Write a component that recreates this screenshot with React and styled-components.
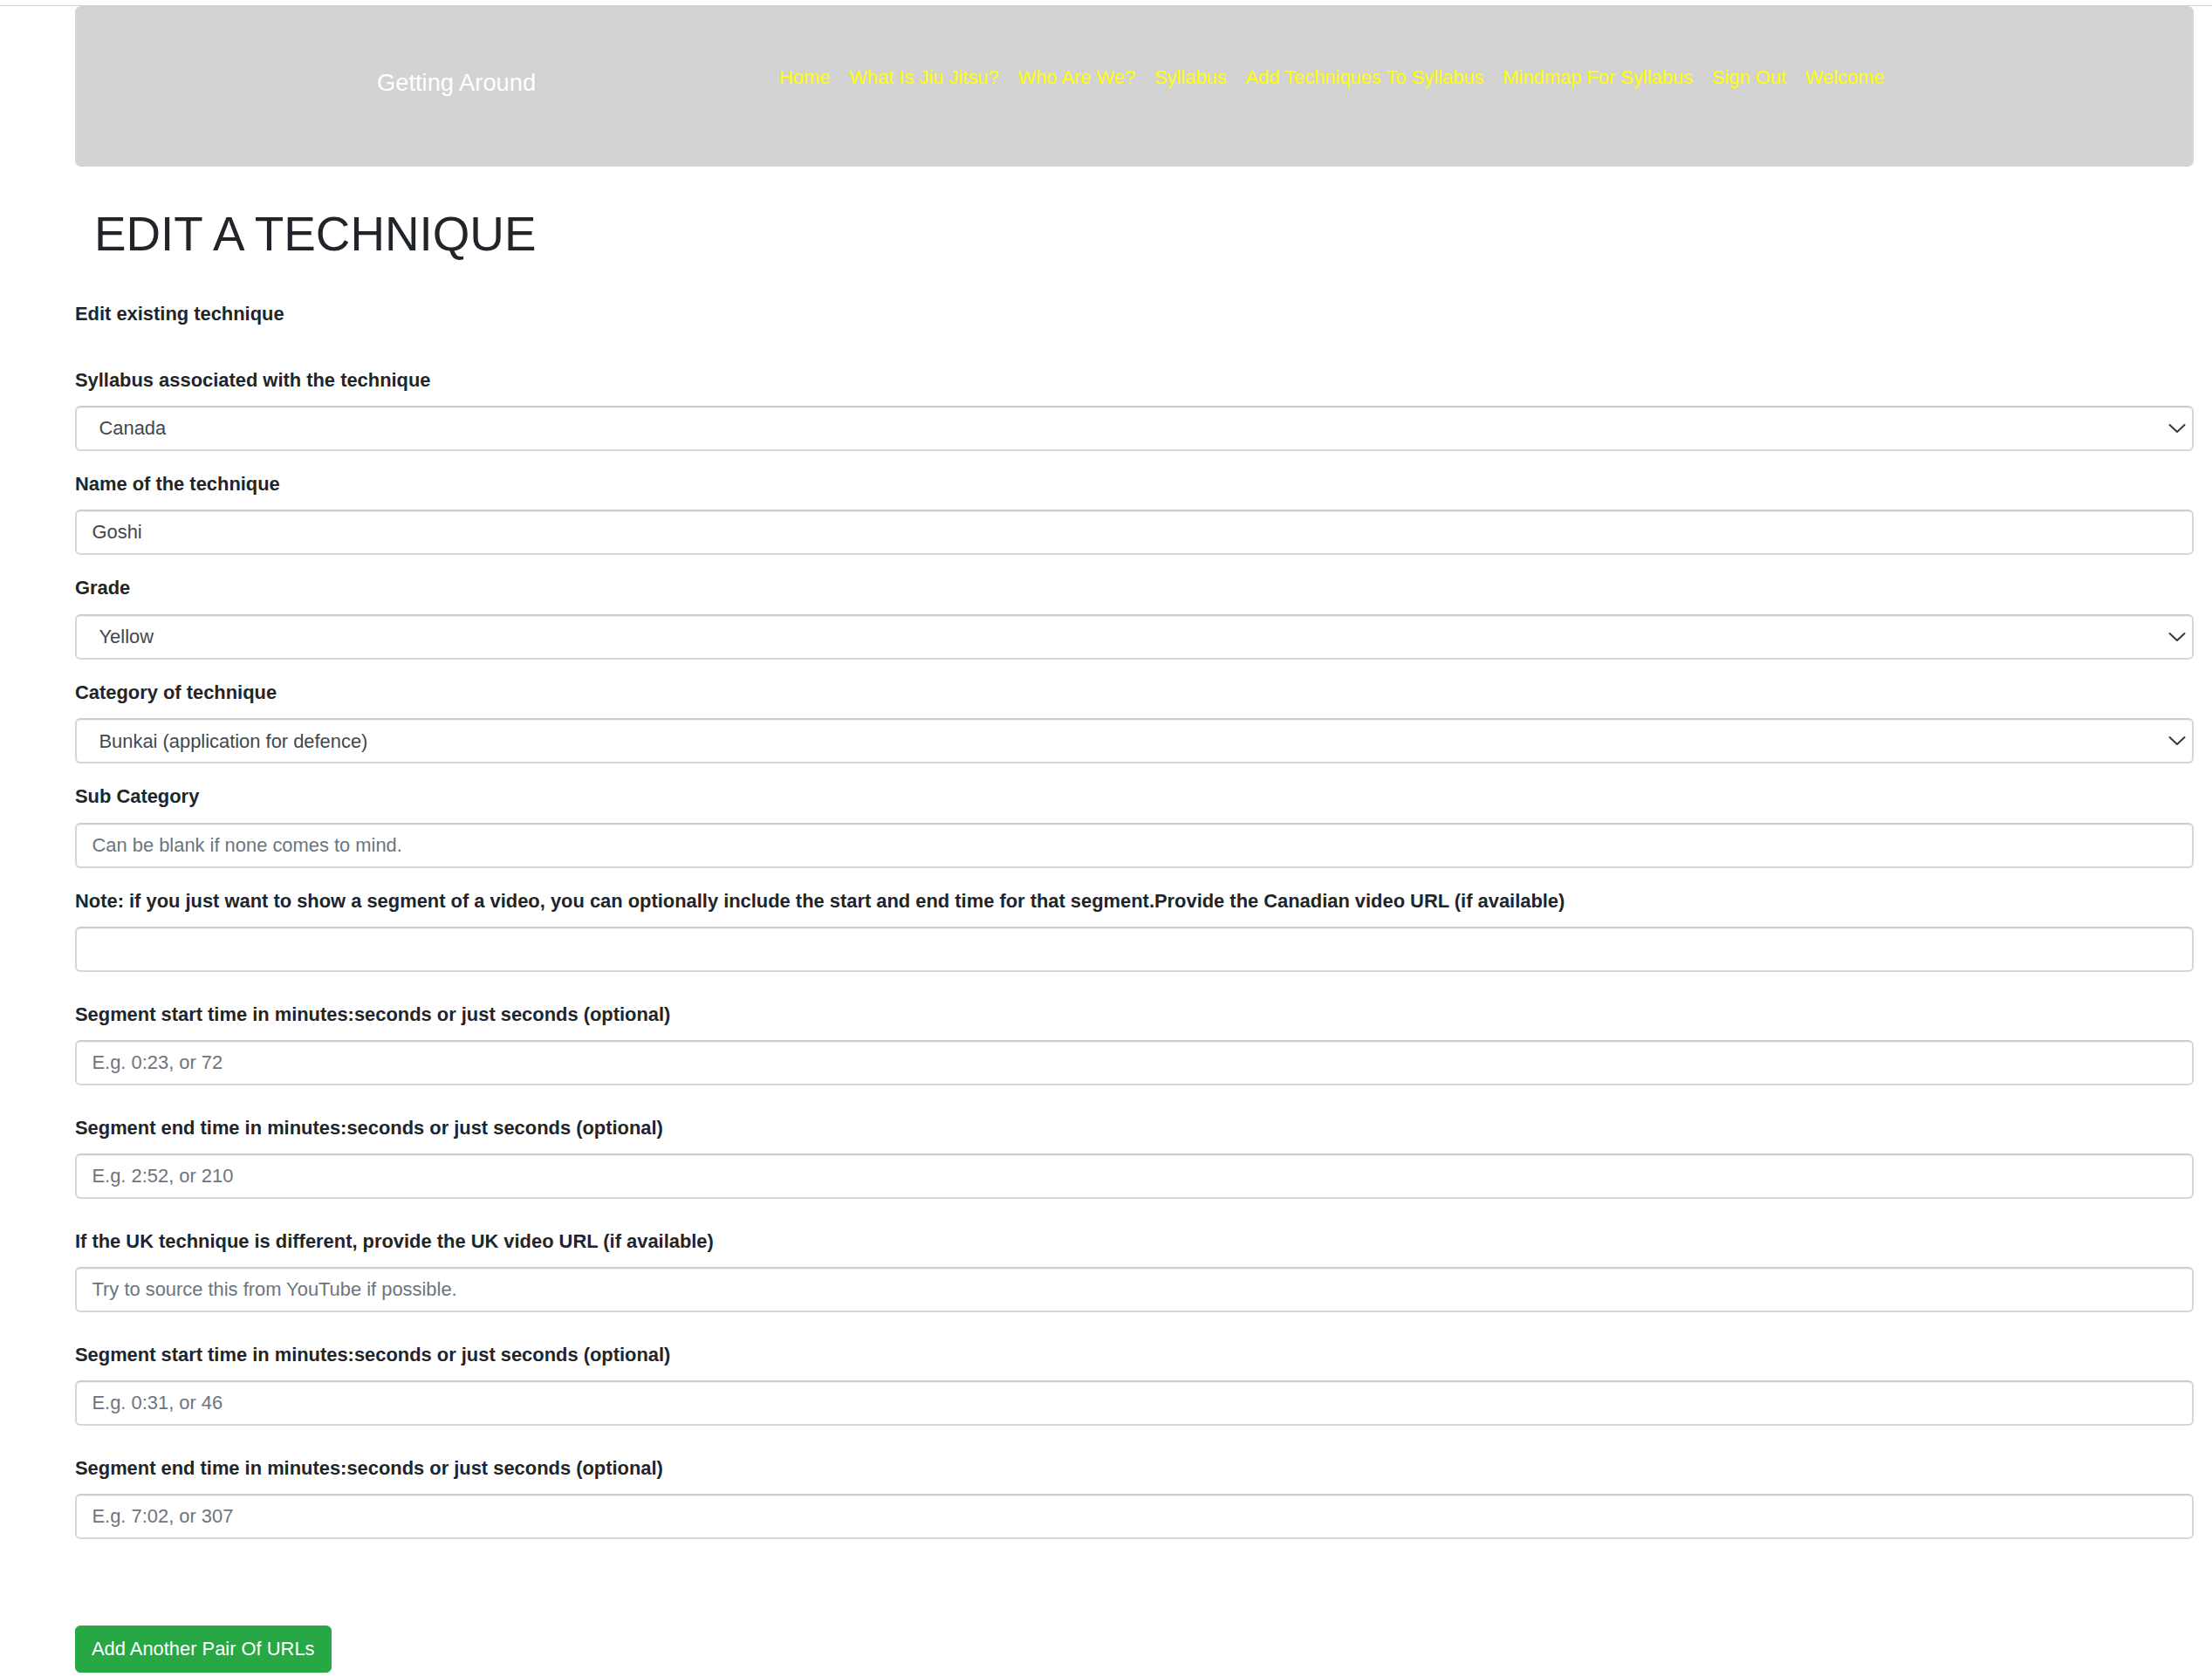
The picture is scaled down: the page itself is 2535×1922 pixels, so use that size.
import React from "react";
import styled, { createGlobalStyle } from "styled-components";

const GlobalStyle = createGlobalStyle`
  body {
    margin: 0;
    background: #fff;
    font-family: "Liberation Sans", Arial, sans-serif;
    color: #212529;
  }
  * {
    box-sizing: border-box;
  }
`;

const Page = styled.div`
  padding-top: 6px;
`;

const TopRule = styled.div`
  height: 1px;
  background: #cfcfcf;
`;

const Container = styled.div`
  padding: 0 21px 40px 86px;
`;

const Header = styled.header`
  display: flex;
  align-items: flex-start;
  height: 184px;
  padding-left: 346px;
  background: #d3d3d3;
  border-radius: 7px;
`;

const Brand = styled.a`
  margin-top: 68px;
  margin-right: 268px;
  font-size: 27.3px;
  line-height: 40.5px;
  color: #fff;
  text-decoration: none;
  white-space: nowrap;
`;

const Nav = styled.nav`
  display: flex;
  margin-top: 65.5px;
`;

const NavLink = styled.a`
  padding: 0 10.9px;
  font-size: 21.9px;
  line-height: 32.4px;
  color: #ffff00;
  text-decoration: none;
  white-space: nowrap;
`;

const Title = styled.h1`
  margin: 44.6px 0 0;
  padding-left: 22px;
  font-size: 54.8px;
  line-height: 64.8px;
  font-weight: 400;
  color: #212529;
`;

const Intro = styled.p`
  margin: 43.2px 0 43.6px;
  font-size: 21.9px;
  line-height: 32.4px;
  font-weight: 700;
`;

const Form = styled.form`
  display: flex;
  flex-direction: column;
`;

const Group = styled.div`
  display: flex;
  flex-direction: column;
  margin-bottom: ${(p) => (p.$wide ? "32.6px" : "22px")};
`;

const Label = styled.label`
  margin-bottom: 13px;
  font-size: 21.9px;
  line-height: 32.4px;
  font-weight: 700;
  color: #212529;
`;

const Input = styled.input`
  height: 52px;
  width: 100%;
  padding: 0 17.5px;
  border: 2px solid #d3d7dc;
  border-top-color: #c9ced4;
  border-radius: 6px;
  box-shadow: inset 0 1px 1px rgba(0, 0, 0, 0.05);
  font-family: inherit;
  font-size: 21.9px;
  color: #41474d;
  background: #fff;
  outline: none;

  &::placeholder {
    color: #6c757d;
  }
`;

const SelectWrap = styled.div`
  position: relative;
`;

const Select = styled.select`
  appearance: none;
  height: 52px;
  width: 100%;
  padding: 0 48px 0 25.5px;
  border: 2px solid #d3d7dc;
  border-top-color: #c9ced4;
  border-radius: 6px;
  box-shadow: inset 0 1px 1px rgba(0, 0, 0, 0.05);
  font-family: inherit;
  font-size: 21.9px;
  color: #41474d;
  background: #fff;
  outline: none;
`;

const Chevron = styled.svg`
  position: absolute;
  right: 9px;
  top: 50%;
  transform: translateY(-50%);
  pointer-events: none;
`;

const AddButton = styled.button`
  align-self: flex-start;
  height: 54px;
  margin-top: 66px;
  padding: 0 18px;
  border: 1px solid #28a745;
  border-radius: 6px;
  background: #28a745;
  color: #fff;
  font-family: inherit;
  font-size: 21.9px;
  cursor: pointer;
`;

const navItems = [
  "Home",
  "What Is Jiu Jitsu?",
  "Who Are We?",
  "Syllabus",
  "Add Techniques To Syllabus",
  "Mindmap For Syllabus",
  "Sign Out",
  "Welcome",
];

const DropDown = ({ value, options }) => (
  <SelectWrap>
    <Select defaultValue={value}>
      {options.map((o) => (
        <option key={o}>{o}</option>
      ))}
    </Select>
    <Chevron width="20" height="11" viewBox="0 0 20 11">
      <path
        d="M1.5 1.5 L10 9.5 L18.5 1.5"
        fill="none"
        stroke="#343a40"
        strokeWidth="2"
        strokeLinecap="round"
        strokeLinejoin="round"
      />
    </Chevron>
  </SelectWrap>
);

const App = () => {
  return (
    <>
      <GlobalStyle />
      <Page>
        <TopRule />
        <Container>
          <Header>
            <Brand href="#">Getting Around</Brand>
            <Nav>
              {navItems.map((item) => (
                <NavLink href="#" key={item}>
                  {item}
                </NavLink>
              ))}
            </Nav>
          </Header>

          <Title>EDIT A TECHNIQUE</Title>
          <Intro>Edit existing technique</Intro>

          <Form onSubmit={(e) => e.preventDefault()}>
            <Group>
              <Label>Syllabus associated with the technique</Label>
              <DropDown value="Canada" options={["Canada", "UK"]} />
            </Group>
            <Group>
              <Label>Name of the technique</Label>
              <Input defaultValue="Goshi" />
            </Group>
            <Group>
              <Label>Grade</Label>
              <DropDown
                value="Yellow"
                options={["White", "Yellow", "Orange", "Green", "Blue", "Brown", "Black"]}
              />
            </Group>
            <Group>
              <Label>Category of technique</Label>
              <DropDown
                value="Bunkai (application for defence)"
                options={["Kata", "Bunkai (application for defence)", "Kihon"]}
              />
            </Group>
            <Group>
              <Label>Sub Category</Label>
              <Input placeholder="Can be blank if none comes to mind." />
            </Group>
            <Group $wide>
              <Label>
                Note: if you just want to show a segment of a video, you can optionally include the
                start and end time for that segment.Provide the Canadian video URL (if available)
              </Label>
              <Input />
            </Group>
            <Group $wide>
              <Label>Segment start time in minutes:seconds or just seconds (optional)</Label>
              <Input placeholder="E.g. 0:23, or 72" />
            </Group>
            <Group $wide>
              <Label>Segment end time in minutes:seconds or just seconds (optional)</Label>
              <Input placeholder="E.g. 2:52, or 210" />
            </Group>
            <Group $wide>
              <Label>If the UK technique is different, provide the UK video URL (if available)</Label>
              <Input placeholder="Try to source this from YouTube if possible." />
            </Group>
            <Group $wide>
              <Label>Segment start time in minutes:seconds or just seconds (optional)</Label>
              <Input placeholder="E.g. 0:31, or 46" />
            </Group>
            <Group $wide>
              <Label>Segment end time in minutes:seconds or just seconds (optional)</Label>
              <Input placeholder="E.g. 7:02, or 307" />
            </Group>

            <AddButton type="button">Add Another Pair Of URLs</AddButton>
          </Form>
        </Container>
      </Page>
    </>
  );
};

export default App;
